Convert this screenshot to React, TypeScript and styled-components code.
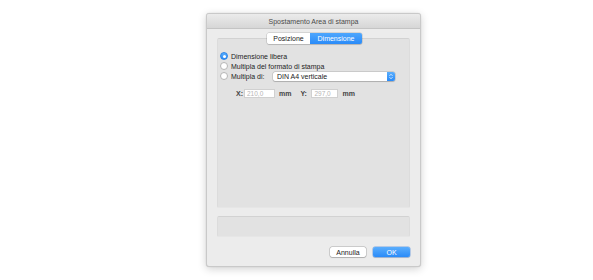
import React from "react";
import styled, { createGlobalStyle } from "styled-components";

const Global = createGlobalStyle`
  html, body { margin: 0; padding: 0; background: #ffffff; }
  body { font-family: "Liberation Sans", Arial, sans-serif; }
`;

const Page = styled.div`
  width: 593px;
  height: 280px;
  box-sizing: border-box;
  padding: 13px 0 0 206px;
  background: #ffffff;
  overflow: hidden;
`;

const Window = styled.div`
  width: 215px;
  height: 254px;
  box-sizing: border-box;
  background: #ececec;
  border: 1px solid #c9c9c9;
  border-radius: 3px;
  box-shadow: 0 2px 8px rgba(0, 0, 0, 0.18), 0 0 1px rgba(0, 0, 0, 0.2);
  display: flex;
  flex-direction: column;
  overflow: hidden;
`;

const TitleBar = styled.div`
  height: 14px;
  flex: none;
  display: flex;
  align-items: center;
  justify-content: center;
  background: linear-gradient(#ebebeb, #d6d6d6);
  border-bottom: 1px solid #c4c4c4;
  font-size: 7px;
  color: #4a4a4a;
`;

const Body = styled.div`
  flex: 1;
  display: flex;
  flex-direction: column;
  padding: 4px 10px 10px 10px;
`;

const Tabs = styled.div`
  align-self: center;
  display: flex;
  height: 11px;
  margin-left: 2px;
  margin-bottom: -6px;
  position: relative;
  z-index: 1;
  border-radius: 2px;
  box-shadow: 0 0 0 0.5px rgba(0, 0, 0, 0.2), 0 1px 1px rgba(0, 0, 0, 0.1);
  overflow: hidden;
`;

const Tab = styled.div<{ $active?: boolean }>`
  height: 11px;
  width: ${(p) => (p.$active ? 52 : 43)}px;
  display: flex;
  align-items: center;
  justify-content: center;
  font-size: 7px;
  background: ${(p) => (p.$active ? "linear-gradient(#4ea6fd, #2a8bf8)" : "#ffffff")};
  color: ${(p) => (p.$active ? "#ffffff" : "#222222")};
`;

const Panel = styled.div<{ $h: number }>`
  height: ${(p) => p.$h}px;
  box-sizing: border-box;
  background: #e2e2e2;
  border-top: 1px solid #d2d2d2;
  border-left: 1px solid #dcdcdc;
  border-right: 1px solid #dcdcdc;
  border-bottom: 1px solid #e6e6e6;
  border-radius: 2px;
`;

const PanelContent = styled.div`
  display: flex;
  flex-direction: column;
  padding: 12px 0 0 2px;
`;

const Row = styled.div`
  height: 10px;
  display: flex;
  align-items: center;
  gap: 3px;
  font-size: 7px;
  color: #222222;
`;

const Radio = styled.span<{ $on?: boolean }>`
  width: 8px;
  height: 8px;
  box-sizing: border-box;
  border-radius: 50%;
  flex: none;
  display: flex;
  align-items: center;
  justify-content: center;
  background: ${(p) => (p.$on ? "linear-gradient(#5aaefd, #2b8cf7)" : "#ffffff")};
  border: 0.5px solid ${(p) => (p.$on ? "#2b84e8" : "#b5b5b5")};
  &::after {
    content: "";
    width: 3px;
    height: 3px;
    border-radius: 50%;
    background: #ffffff;
    display: ${(p) => (p.$on ? "block" : "none")};
  }
`;

const RowLabel = styled.span<{ $w?: number }>`
  ${(p) => (p.$w ? `width: ${p.$w}px;` : "")}
  white-space: nowrap;
`;

const Popup = styled.div`
  width: 122px;
  height: 9px;
  box-sizing: border-box;
  display: flex;
  align-items: center;
  background: #ffffff;
  border-radius: 2px;
  box-shadow: 0 0 0 0.5px rgba(0, 0, 0, 0.18), 0 0.5px 1px rgba(0, 0, 0, 0.15);
  overflow: hidden;
`;

const PopupText = styled.span`
  flex: 1;
  padding-left: 4px;
  font-size: 7px;
  color: #222222;
`;

const Stepper = styled.span`
  width: 8px;
  height: 9px;
  flex: none;
  display: flex;
  align-items: center;
  justify-content: center;
  background: linear-gradient(#5aaefd, #2a8bf8);
`;

const SizeRow = styled.div`
  display: flex;
  align-items: center;
  height: 9px;
  margin-top: 8px;
  padding-left: 16px;
  font-size: 7px;
  color: #333333;
`;

const AxisLabel = styled.span<{ $ml: number; $w: number }>`
  margin-left: ${(p) => p.$ml}px;
  font-weight: bold;
  color: #444444;
  width: ${(p) => p.$w}px;
  flex: none;
`;

const Field = styled.div<{ $w: number }>`
  width: ${(p) => p.$w}px;
  height: 9px;
  box-sizing: border-box;
  background: #ffffff;
  border: 0.5px solid #d0d0d0;
  display: flex;
  align-items: center;
  padding-left: 2px;
  font-size: 6.5px;
  color: #b5b5b5;
`;

const Unit = styled.span`
  margin-left: 4px;
  font-weight: bold;
  color: #444444;
`;

const Buttons = styled.div`
  display: flex;
  justify-content: flex-end;
  gap: 7px;
  margin-top: 10px;
`;

const Button = styled.div<{ $primary?: boolean; $w: number }>`
  width: ${(p) => p.$w}px;
  height: 10px;
  box-sizing: border-box;
  display: flex;
  align-items: center;
  justify-content: center;
  font-size: 7px;
  border-radius: 2px;
  background: ${(p) => (p.$primary ? "linear-gradient(#5aaefd, #2a8bf8)" : "#ffffff")};
  color: ${(p) => (p.$primary ? "#ffffff" : "#222222")};
  box-shadow: 0 0 0 0.5px ${(p) => (p.$primary ? "rgba(30,110,220,0.5)" : "rgba(0,0,0,0.25)")},
    0 0.5px 1px rgba(0, 0, 0, 0.15);
`;

const Gap = styled.div<{ $h: number }>`
  height: ${(p) => p.$h}px;
  flex: none;
`;

function StepperIcon() {
  return (
    <svg width="6" height="7" viewBox="0 0 6 7">
      <path d="M1.5 2.8 L3 1.3 L4.5 2.8" fill="none" stroke="#fff" strokeWidth="0.8" />
      <path d="M1.5 4.2 L3 5.7 L4.5 4.2" fill="none" stroke="#fff" strokeWidth="0.8" />
    </svg>
  );
}

export default function App() {
  return (
    <Page>
      <Global />
      <Window>
        <TitleBar>Spostamento Area di stampa</TitleBar>
        <Body>
          <Tabs>
            <Tab>Posizione</Tab>
            <Tab $active>Dimensione</Tab>
          </Tabs>
          <Panel $h={170}>
            <PanelContent>
              <Row>
                <Radio $on />
                <RowLabel>Dimensione libera</RowLabel>
              </Row>
              <Row>
                <Radio />
                <RowLabel>Multipla del formato di stampa</RowLabel>
              </Row>
              <Row>
                <Radio />
                <RowLabel $w={39}>Multipla di:</RowLabel>
                <Popup>
                  <PopupText>DIN A4 verticale</PopupText>
                  <Stepper>
                    <StepperIcon />
                  </Stepper>
                </Popup>
              </Row>
              <SizeRow>
                <AxisLabel $ml={0} $w={8}>X:</AxisLabel>
                <Field $w={31}>210,0</Field>
                <Unit>mm</Unit>
                <AxisLabel $ml={9} $w={11}>Y:</AxisLabel>
                <Field $w={27}>297,0</Field>
                <Unit>mm</Unit>
              </SizeRow>
            </PanelContent>
          </Panel>
          <Gap $h={8} />
          <Panel $h={21} />
          <Buttons>
            <Button $w={36}>Annulla</Button>
            <Button $w={37} $primary>OK</Button>
          </Buttons>
        </Body>
      </Window>
    </Page>
  );
}
